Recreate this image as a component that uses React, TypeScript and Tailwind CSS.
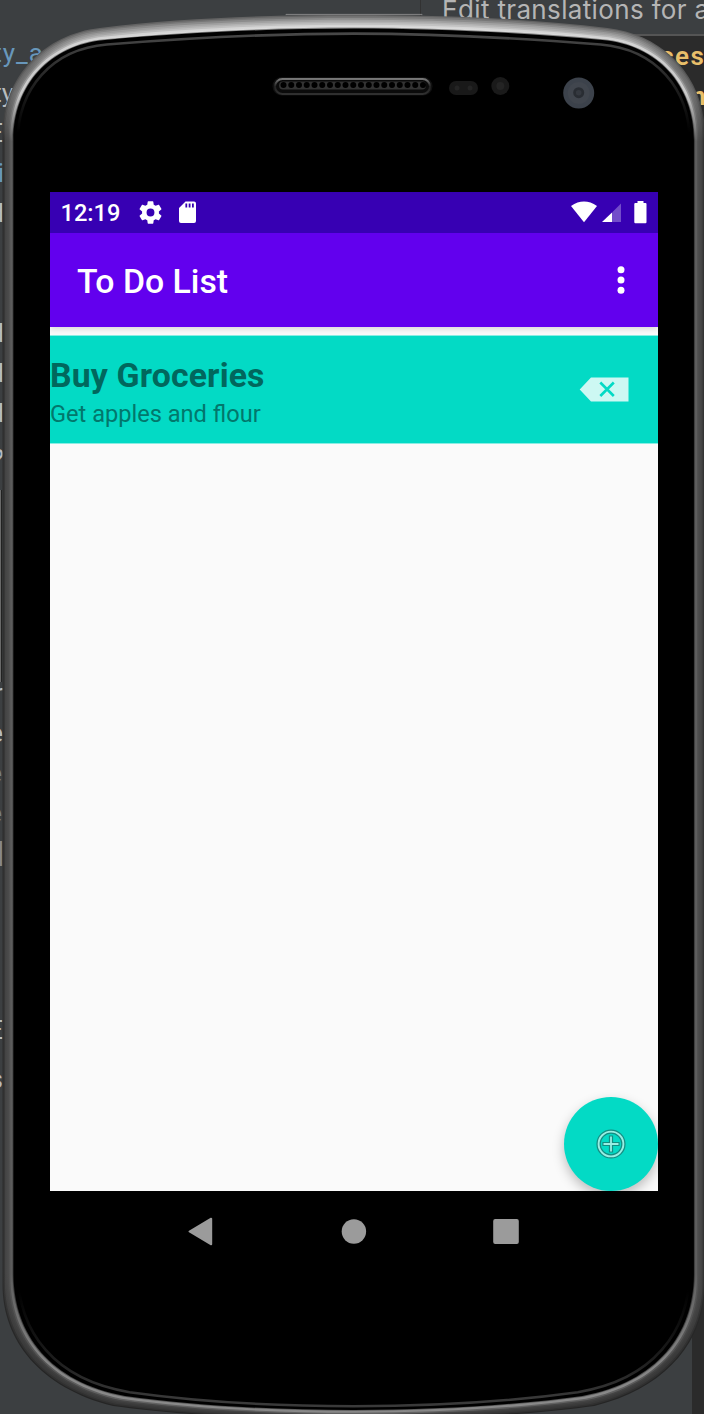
import React from "react";

type Shape = number[];

// Left half of the casing, as cubic control points; the right half is mirrored.
const OUTER: Shape = [
  353.7, 15, 270, 15, 180, 18, 100, 28, 45, 34, 2.5, 76, 2.5, 135, 2.5, 1285, 2.5, 1340, 40, 1388,
  113, 1406, 170, 1414, 260, 1420, 353.7, 1420,
];
const INNER: Shape = [
  353.7, 28.5, 270, 28.5, 180, 33, 105, 40, 50, 45, 13.5, 85, 13.5, 140, 13.5, 1275, 14, 1334, 50, 1382,
  125, 1396, 190, 1405, 270, 1410, 353.7, 1410,
];

function casing(t: number): string {
  const p: [number, number][] = [];
  for (let i = 0; i < OUTER.length; i += 2) {
    p.push([
      OUTER[i] + (INNER[i] - OUTER[i]) * t,
      OUTER[i + 1] + (INNER[i + 1] - OUTER[i + 1]) * t,
    ]);
  }
  const l = (i: number) => `${p[i][0].toFixed(2)} ${p[i][1].toFixed(2)}`;
  const r = (i: number) => `${(707.4 - p[i][0]).toFixed(2)} ${p[i][1].toFixed(2)}`;
  return [
    `M${l(0)}C${l(1)} ${l(2)} ${l(3)}`,
    `C${l(4)} ${l(5)} ${l(6)}L${l(7)}`,
    `C${l(8)} ${l(9)} ${l(10)}`,
    `C${l(11)} ${l(12)} ${l(13)}`,
    `C${r(12)} ${r(11)} ${r(10)}`,
    `C${r(9)} ${r(8)} ${r(7)}L${r(6)}`,
    `C${r(5)} ${r(4)} ${r(3)}`,
    `C${r(2)} ${r(1)} ${r(0)}Z`,
  ].join("");
}

// Depth into the rim, then its shade at the top, upper corner, side, lower corner and bottom.
const RIM: [number, string, string, string, string, string][] = [
  [0, "#636363", "#555555", "#2c2c2c", "#252525", "#252525"],
  [0.1, "#777777", "#646464", "#363636", "#303030", "#303030"],
  [0.22, "#8c8c8c", "#6d6d6d", "#444444", "#383838", "#383838"],
  [0.35, "#a2a2a2", "#727272", "#484848", "#3a3a3a", "#3d3d3d"],
  [0.48, "#b2b2b2", "#7d7d7d", "#4b4b4b", "#414141", "#454545"],
  [0.6, "#c2c2c2", "#999999", "#525252", "#565656", "#626262"],
  [0.72, "#d6d6d6", "#cccccc", "#5e5e5e", "#858585", "#8a8a8a"],
  [0.84, "#dddddd", "#c8c8c8", "#5a5a5a", "#7d7d7d", "#868686"],
  [0.93, "#8a8a8a", "#666666", "#303030", "#484848", "#555555"],
  [1, "#000000", "#000000", "#000000", "#000000", "#000000"],
];

function PhoneCasing() {
  return (
    <svg className="absolute inset-0" width="704" height="1414" viewBox="0 0 704 1414" aria-hidden="true">
      <defs>
        {RIM.map((c, i) => (
          <linearGradient key={i} id={`rim${i}`} gradientUnits="userSpaceOnUse" x1="0" y1="0" x2="0" y2="1414">
            <stop offset="0.018" stopColor={c[1]} />
            <stop offset="0.048" stopColor={c[2]} />
            <stop offset="0.066" stopColor={c[2]} />
            <stop offset="0.1" stopColor={c[3]} />
            <stop offset="0.9" stopColor={c[3]} />
            <stop offset="0.965" stopColor={c[4]} />
            <stop offset="0.99" stopColor={c[5]} />
          </linearGradient>
        ))}
        <linearGradient id="lip" gradientUnits="userSpaceOnUse" x1="0" y1="30" x2="0" y2="1400">
          <stop offset="0" stopColor="#4a4a4a" />
          <stop offset="0.018" stopColor="#383838" />
          <stop offset="0.045" stopColor="#1c1c1c" />
          <stop offset="0.075" stopColor="#000000" />
          <stop offset="0.92" stopColor="#000000" />
          <stop offset="0.97" stopColor="#1d1d1d" />
          <stop offset="1" stopColor="#3a3a3a" />
        </linearGradient>
        <linearGradient id="speaker" x1="0" y1="0" x2="0" y2="1">
          <stop offset="0" stopColor="#777777" />
          <stop offset="0.5" stopColor="#222222" />
          <stop offset="1" stopColor="#303030" />
        </linearGradient>
      </defs>
      {RIM.map((c, i) => (
        <path key={i} d={casing(c[0])} fill={`url(#rim${i})`} />
      ))}
      <path d={casing(1.38)} fill="none" stroke="url(#lip)" strokeWidth="2.6" />
      <path d="M286 15.1V14.4H422V15.1" fill="none" stroke="#858585" />
      <rect x="272.5" y="77" width="160" height="18.5" rx="9" fill="#101010" />
      <rect x="275" y="79" width="155" height="15" rx="7.5" fill="#0b0b0b" stroke="url(#speaker)" strokeWidth="2" />
      <rect x="279" y="81.5" width="147" height="8" rx="4" fill="#333333" />
      {Array.from({ length: 19 }, (_, i) => (
        <circle key={i} cx={283.5 + i * 7.75} cy="85" r="3" fill="#000000" />
      ))}
      <rect x="449" y="81" width="29" height="14" rx="7" fill="#191919" />
      <circle cx="457" cy="88" r="2.5" fill="#242424" />
      <circle cx="470" cy="88" r="2.5" fill="#242424" />
      <circle cx="500.3" cy="86" r="9" fill="#1a1a1a" />
      <circle cx="500.3" cy="86" r="4" fill="#242424" />
      <circle cx="578.7" cy="93" r="15.5" fill="#3c424b" />
      <circle cx="578.7" cy="93" r="11" fill="#41464e" />
      <circle cx="578.7" cy="92.7" r="5.5" fill="#292d33" />
      <circle cx="578.7" cy="92.7" r="2.8" fill="#353940" />
    </svg>
  );
}

const CODE: [string, string][] = [
  ["ty_a", "w-[44px] tracking-[1px] text-[#6897bb]"],
  ["ty", "w-[14px] text-[#b8bbbd]"],
  ["E", "w-[3px] text-[#b8bbbd]"],
  ["i", "w-[4px] text-[#6897bb]"],
  ["d", "w-[4px] text-[#b8bbbd]"],
  ["", ""],
  ["", ""],
  ["d", "w-[4px] text-[#b8bbbd]"],
  ["d", "w-[4px] text-[#b8bbbd]"],
  ["d", "w-[4px] text-[#b8bbbd]"],
  ["?", "w-[4px] pt-[6px] text-[#b8bbbd]"],
  ["", ""],
  ["", ""],
  ["", ""],
  ["", ""],
  ["", ""],
  ["r", "w-[3px] text-[#b8bbbd]"],
  ["e", "w-[3px] text-[#b8bbbd]"],
  ["e", "w-[2px] text-[#777f87]"],
  ["e", "w-[2px] text-[#777f87]"],
  ["]", "w-[4px] text-[#888888]"],
  ["", ""],
  ["", ""],
  ["", ""],
  ["E", "w-[3px] pt-[17px] text-[#b8bbbd]"],
  ["s", "w-[3px] pt-[26px] text-[#b8bbbd]"],
];

function EditorBackdrop() {
  return (
    <div className="flex h-[1414px] bg-[#3c3f41] font-['Roboto',sans-serif]">
      <div className="flex w-[421px] flex-col border-r border-[#323232] pt-[33px] text-[26px] leading-10">
        {CODE.map(([text, tone], i) => (
          <div key={i} className="h-10">
            <div className={`flex min-h-10 justify-end overflow-hidden ${tone}`}>
              <span>{text}</span>
            </div>
          </div>
        ))}
      </div>
      <div className="flex flex-1 flex-col overflow-hidden">
        <div className="h-[36px] shrink-0 overflow-hidden border-b-2 border-[#555555] pl-[21px] font-['Inter',sans-serif] text-[26px] leading-[20px] tracking-[0.35px] whitespace-nowrap text-[#b5b5b5]">
          Edit translations for all locales
        </div>
        <div className="flex flex-1 justify-end bg-[linear-gradient(#2b2b2b_700px,#3c3f41_700px)]">
          <div className="w-[44px] overflow-hidden bg-[linear-gradient(90deg,transparent_32px,#2b2b2b_32px)] font-['Roboto',sans-serif] text-[26px] leading-[40px] font-semibold text-[#e8bf6a]">
            <div className="flex tracking-[1.5px]">ces</div>
            <div className="pl-[31px]">n</div>
          </div>
        </div>
      </div>
    </div>
  );
}

function StatusBar() {
  return (
    <div className="flex h-[41px] items-center bg-[#3700b3] pr-[10px] pl-[10.5px] text-white">
      <span className="w-[76.5px] pt-[2px] text-[23.6px] leading-none font-medium">12:19</span>
      <svg width="27" height="27" viewBox="0 0 24 24" fill="currentColor">
        <path d="M19.43 12.98c.04-.32.07-.64.07-.98s-.03-.66-.07-.98l2.11-1.65c.19-.15.24-.42.12-.64l-2-3.46c-.12-.22-.39-.3-.61-.22l-2.49 1c-.52-.4-1.08-.73-1.69-.98l-.38-2.65C14.46 2.18 14.25 2 14 2h-4c-.25 0-.46.18-.49.42l-.38 2.65c-.61.25-1.17.59-1.69.98l-2.49-1c-.23-.09-.49 0-.61.22l-2 3.46c-.13.22-.07.49.12.64l2.11 1.65c-.04.32-.07.65-.07.98s.03.66.07.98l-2.11 1.65c-.19.15-.24.42-.12.64l2 3.46c.12.22.39.3.61.22l2.49-1c.52.4 1.08.73 1.69.98l.38 2.65c.03.24.24.42.49.42h4c.25 0 .46-.18.49-.42l.38-2.65c.61-.25 1.17-.59 1.69-.98l2.49 1c.23.09.49 0 .61-.22l2-3.46c.12-.22.07-.49-.12-.64l-2.11-1.65zM12 15.5a3.5 3.5 0 1 1 0-7 3.5 3.5 0 0 1 0 7z" />
      </svg>
      <svg className="-mt-px ml-[15px]" width="17" height="22" viewBox="0 0 17 22">
        <path fill="currentColor" fillRule="evenodd" d="M6.5 .5H15q2 0 2 2V20q0 2-2 2H2q-2 0-2-2V7ZM6.4 2.6V6.4H8.2V2.6ZM9.7 2.6V6.4H11.5V2.6ZM13 2.6V6.4H14.8V2.6Z" />
      </svg>
      <svg className="-mt-px ml-auto" width="77" height="24" viewBox="571 200 77 24">
        <path fill="currentColor" d="M571 206Q584 197.2 597 206L584 222.3Z" />
        <path fill="#ffffff" fillOpacity=".3" d="M621 203.5V222H612V212.5Z" />
        <path fill="currentColor" d="M612 212.5V222H602Z" />
        <path fill="currentColor" d="M637.5 201H643.5V203H645.5Q646.5 203 646.5 204V222Q646.5 223.3 645.5 223.3H635.3Q634.3 223.3 634.3 222V204Q634.3 203 635.3 203H637.5Z" />
      </svg>
    </div>
  );
}

function AppBar() {
  return (
    <div className="relative flex h-[94px] items-center justify-between bg-[#6200ee] pr-[33px] pl-[27px] text-white shadow-[0_2px_6px_rgba(0,0,0,0.14)]">
      <h1 className="pt-[3px] text-[33.8px] leading-none font-medium">To Do List</h1>
      <svg width="8" height="28" viewBox="0 0 8 28" fill="currentColor">
        <circle cx="4" cy="3.8" r="3.5" />
        <circle cx="4" cy="14" r="3.5" />
        <circle cx="4" cy="24.2" r="3.5" />
      </svg>
    </div>
  );
}

function TodoRow() {
  return (
    <div className="mt-[8px] flex h-[109px] items-center justify-between border-y border-[#8aede3] bg-[#03dac5] pr-[29px]">
      <div className="pt-[10px]">
        <h2 className="-mt-px text-[33.8px] leading-[40px] font-bold tracking-[0.15px] text-[#01675d]">Buy Groceries</h2>
        <p className="text-[23.6px] leading-[37px] text-[#02776c]">Get apples and flour</p>
      </div>
      <svg width="50" height="25" viewBox="0 0 50 25">
        <path d="M.7 12.5L12 .5H49.5V24.5H12Z" fill="#cdf8f3" />
        <path d="M21.3 5.5L34.8 19M34.8 5.5L21.3 19" stroke="#03dac5" strokeWidth="2.6" />
      </svg>
    </div>
  );
}

function NavBar() {
  return (
    <svg className="shrink-0" width="608" height="81" viewBox="50 1191 608 81" fill="#9b9b9b">
      <path d="M189.5 1231.5L211.2 1218.7V1244.3Z" stroke="#9b9b9b" strokeWidth="2" strokeLinejoin="round" />
      <circle cx="353.9" cy="1231.5" r="12.2" />
      <rect x="493.2" y="1219" width="25.6" height="25" rx="2" />
    </svg>
  );
}

export default function App() {
  return (
    <div className="relative h-[1414px] w-[704px] overflow-hidden">
      <EditorBackdrop />
      <div className="absolute top-[490px] left-0 h-[192px] w-[2px] border-r border-[#222222] bg-[#696969]" />
      <PhoneCasing />
      <main className="absolute top-[192px] left-[50px] flex h-[1080px] w-[608px] flex-col bg-black font-['Roboto',sans-serif]">
        <StatusBar />
        <div className="relative flex flex-1 flex-col overflow-hidden bg-[#fafafa]">
          <AppBar />
          <TodoRow />
          <button
            aria-label="Add item"
            className="absolute right-0 bottom-0 flex size-[94.5px] items-center justify-center rounded-full bg-[#03dac5] shadow-[0_5px_12px_rgba(0,0,0,0.25)]"
          >
            <svg width="30" height="30" viewBox="0 0 30 30" fill="none">
              <circle cx="15" cy="15" r="12.4" stroke="#148d82" strokeWidth="4.4" />
              <circle cx="15" cy="15" r="12.4" stroke="#98eee3" strokeWidth="1.9" />
              <path d="M15 6.4V23.6M6.4 15H23.6" stroke="#148d82" strokeWidth="4.2" />
              <path d="M15 7.5V22.5M7.5 15H22.5" stroke="#98eee3" strokeWidth="1.8" />
            </svg>
          </button>
        </div>
        <NavBar />
      </main>
    </div>
  );
}
